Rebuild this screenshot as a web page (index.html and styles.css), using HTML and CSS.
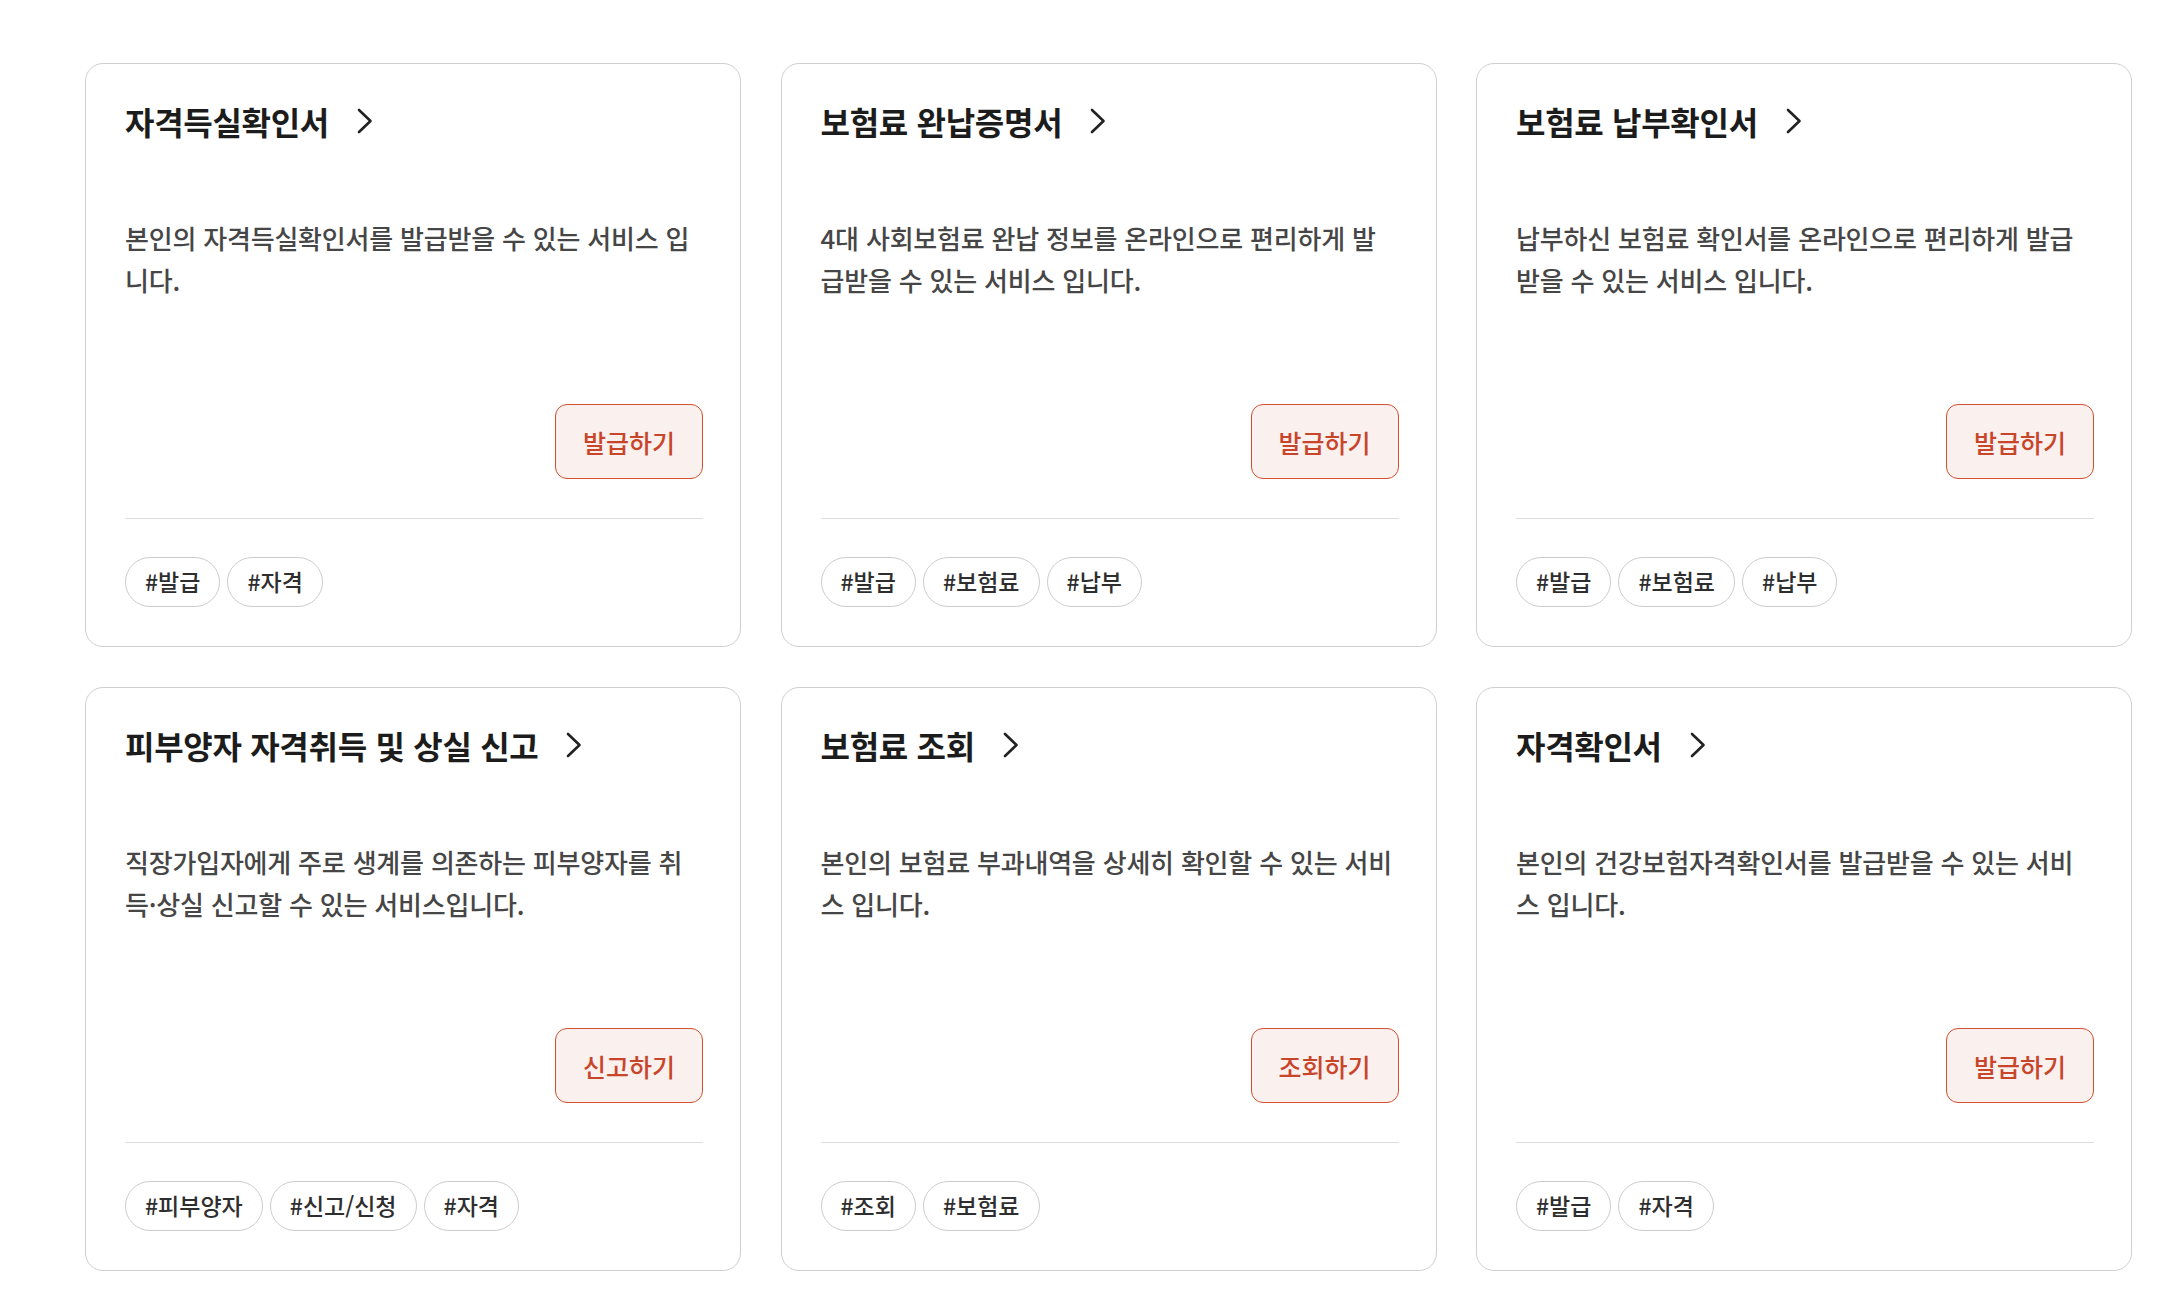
FILE: index.html
```html
<!DOCTYPE html>
<html lang="ko">
<head>
<meta charset="utf-8">
<title>서비스</title>
<link rel="stylesheet" href="styles.css">
</head>
<body>
<main class="grid">
  <article class="card">
    <h2 class="title">자격득실확인서<svg class="chev" viewBox="0 0 20 28"><path d="M4 3 L15.5 14 L4 25"/></svg></h2>
    <p class="desc">본인의 자격득실확인서를 발급받을 수 있는 서비스 입니다.</p>
    <div class="action"><button class="btn">발급하기</button></div>
    <div class="tags"><span class="tag">#발급</span><span class="tag">#자격</span></div>
  </article>
  <article class="card">
    <h2 class="title">보험료 완납증명서<svg class="chev" viewBox="0 0 20 28"><path d="M4 3 L15.5 14 L4 25"/></svg></h2>
    <p class="desc">4대 사회보험료 완납 정보를 온라인으로 편리하게 발급받을 수 있는 서비스 입니다.</p>
    <div class="action"><button class="btn">발급하기</button></div>
    <div class="tags"><span class="tag">#발급</span><span class="tag">#보험료</span><span class="tag">#납부</span></div>
  </article>
  <article class="card">
    <h2 class="title">보험료 납부확인서<svg class="chev" viewBox="0 0 20 28"><path d="M4 3 L15.5 14 L4 25"/></svg></h2>
    <p class="desc">납부하신 보험료 확인서를 온라인으로 편리하게 발급받을 수 있는 서비스 입니다.</p>
    <div class="action"><button class="btn">발급하기</button></div>
    <div class="tags"><span class="tag">#발급</span><span class="tag">#보험료</span><span class="tag">#납부</span></div>
  </article>
  <article class="card">
    <h2 class="title">피부양자 자격취득 및 상실 신고<svg class="chev" viewBox="0 0 20 28"><path d="M4 3 L15.5 14 L4 25"/></svg></h2>
    <p class="desc">직장가입자에게 주로 생계를 의존하는 피부양자를 취득·상실 신고할 수 있는 서비스입니다.</p>
    <div class="action"><button class="btn">신고하기</button></div>
    <div class="tags"><span class="tag">#피부양자</span><span class="tag">#신고/신청</span><span class="tag">#자격</span></div>
  </article>
  <article class="card">
    <h2 class="title">보험료 조회<svg class="chev" viewBox="0 0 20 28"><path d="M4 3 L15.5 14 L4 25"/></svg></h2>
    <p class="desc">본인의 보험료 부과내역을 상세히 확인할 수 있는 서비스 입니다.</p>
    <div class="action"><button class="btn">조회하기</button></div>
    <div class="tags"><span class="tag">#조회</span><span class="tag">#보험료</span></div>
  </article>
  <article class="card">
    <h2 class="title">자격확인서<svg class="chev" viewBox="0 0 20 28"><path d="M4 3 L15.5 14 L4 25"/></svg></h2>
    <p class="desc">본인의 건강보험자격확인서를 발급받을 수 있는 서비스 입니다.</p>
    <div class="action"><button class="btn">발급하기</button></div>
    <div class="tags"><span class="tag">#발급</span><span class="tag">#자격</span></div>
  </article>
</main>
</body>
</html>
```

FILE: styles.css
```css
* { box-sizing: border-box; }
html, body {
  margin: 0;
  padding: 0;
  background: #ffffff;
}
body {
  font-family: "Noto Sans CJK KR", "Noto Sans", sans-serif;
  color: #222;
}
.grid {
  display: grid;
  grid-template-columns: repeat(3, 656px);
  column-gap: 39.5px;
  row-gap: 40px;
  padding: 63px 0 0 85px;
}
.card {
  border: 1px solid #cfcfcf;
  border-radius: 18px;
  padding: 38px 37px 39px 39px;
  display: flex;
  flex-direction: column;
  background: #fff;
}
.title {
  margin: 0;
  height: 38px;
  line-height: 38px;
  font-size: 32px;
  font-weight: 700;
  color: #1c1c1c;
  letter-spacing: -0.3px;
  display: flex;
  align-items: center;
}
.chev {
  width: 20px;
  height: 28px;
  margin-left: 26px;
  fill: none;
  stroke: #222;
  stroke-width: 2.6;
  stroke-linecap: round;
  stroke-linejoin: round;
}
.desc {
  margin: 77px 0 0 0;
  min-height: 84px;
  font-size: 26px;
  font-weight: 500;
  line-height: 42px;
  color: #464646;
  letter-spacing: -0.2px;
}
.action {
  margin-top: 103px;
  display: flex;
  justify-content: flex-end;
  padding-bottom: 39px;
  border-bottom: 1px solid #dcdcdc;
}
.btn {
  height: 75px;
  padding: 0 26px;
  min-width: 148px;
  border: 1.5px solid #d0502f;
  border-radius: 12px;
  background: #faf0ee;
  color: #c8452a;
  font-family: inherit;
  font-size: 25px;
  font-weight: 500;
  cursor: pointer;
}
.tags {
  display: flex;
  gap: 7px;
  padding-top: 38px;
}
.tag {
  height: 50px;
  line-height: 47px;
  padding: 0 19px;
  border: 1px solid #cccccc;
  border-radius: 25px;
  font-size: 23px;
  font-weight: 500;
  color: #2e2e2e;
  background: #fff;
}
```
